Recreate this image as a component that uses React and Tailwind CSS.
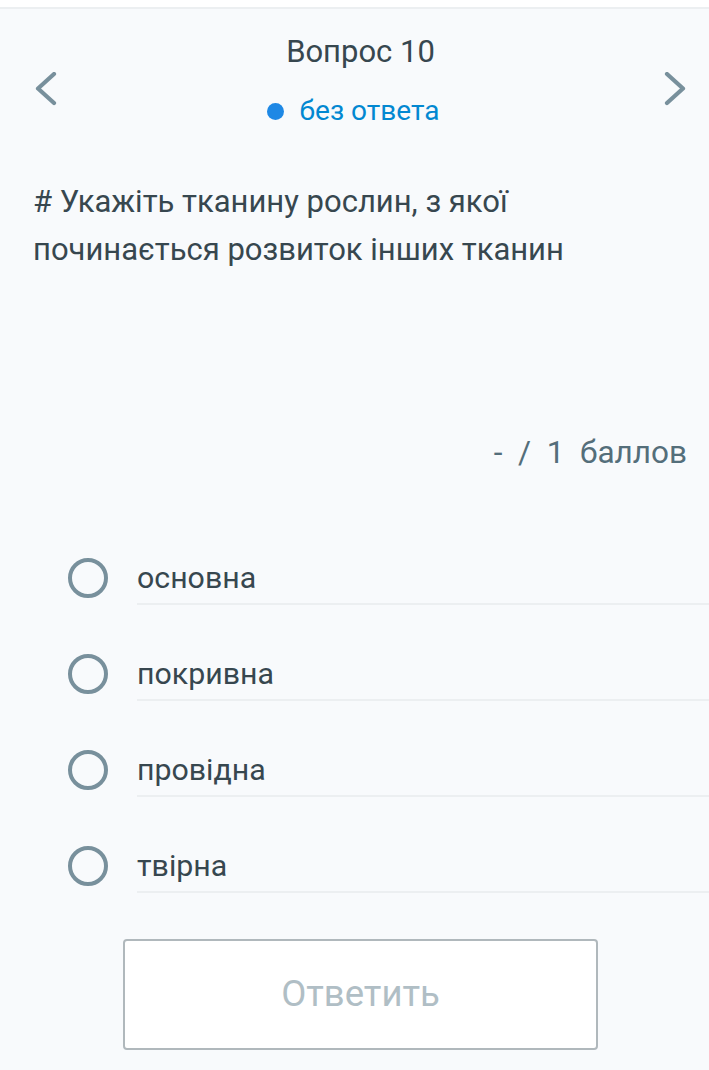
import React from "react";

const Chevron = ({ dir }) => (
  <svg width="24" height="34" viewBox="0 0 24 34" fill="none">
    <path
      d={dir === "left" ? "M20 2 L4 16.5 L20 31" : "M4 2 L20 16.5 L4 31"}
      stroke="#78909c"
      strokeWidth="4.2"
      strokeLinecap="round"
      strokeLinejoin="round"
    />
  </svg>
);

const options = ["основна", "покривна", "провідна", "твірна"];

export default function App() {
  return (
    <div
      className="w-[709px] h-[1070px] bg-[#f8fafc] overflow-hidden text-[#37474f]"
      style={{ fontFamily: "Roboto, 'Noto Sans', sans-serif" }}
    >
      <div className="h-[7px] bg-white" />
      <div className="h-[2px] bg-[#eceff1]" />

      {/* Header */}
      <div className="flex justify-between pl-[34px] pr-[22px] pt-[25px]">
        <div className="mt-[38px]">
          <Chevron dir="left" />
        </div>
        <div className="flex flex-col items-center">
          <div className="text-[31px] leading-[36px] text-[#37474f]">Вопрос 10</div>
          <div className="mt-[25px] mr-[15px] flex items-center h-[32px]">
            <span className="w-[17px] h-[17px] rounded-full bg-[#1e88e5] mr-[16px]" />
            <span className="text-[28px] leading-[32px] text-[#0288d1]">без ответа</span>
          </div>
        </div>
        <div className="mt-[38px]">
          <Chevron dir="right" />
        </div>
      </div>

      {/* Question */}
      <div className="px-[33px] mt-[51px] text-[31px] leading-[48px] text-[#37474f]">
        # Укажіть тканину рослин, з якої
        <br />
        починається розвиток інших тканин
      </div>

      {/* Points */}
      <div className="flex justify-end pr-[22px] mt-[159px] text-[31.5px] leading-[40px] text-[#546e7a] whitespace-pre">
        -  /  1  баллов
      </div>

      {/* Options */}
      <div className="mt-[85px] flex flex-col">
        {options.map((o) => (
          <div key={o} className="flex h-[96px]">
            <div className="w-[137px] flex justify-start pl-[68px]">
              <div className="w-[40px] h-[40px] rounded-full border-[4px] border-[#78909c]" />
            </div>
            <div className="flex-1 flex flex-col">
              <div className="h-[40px] flex items-center text-[30.3px] text-[#37474f]">{o}</div>
              <div className="mt-[5px] h-[2px] bg-[#eceff1]" />
            </div>
          </div>
        ))}
      </div>

      {/* Button */}
      <div className="flex justify-start pl-[123px] mt-[-3px]">
        <div className="w-[475px] h-[111px] bg-white border-2 border-[#b0b8bc] rounded-[4px] flex items-center justify-center text-[36.5px] text-[#b0bec5]">
          Ответить
        </div>
      </div>
    </div>
  );
}
